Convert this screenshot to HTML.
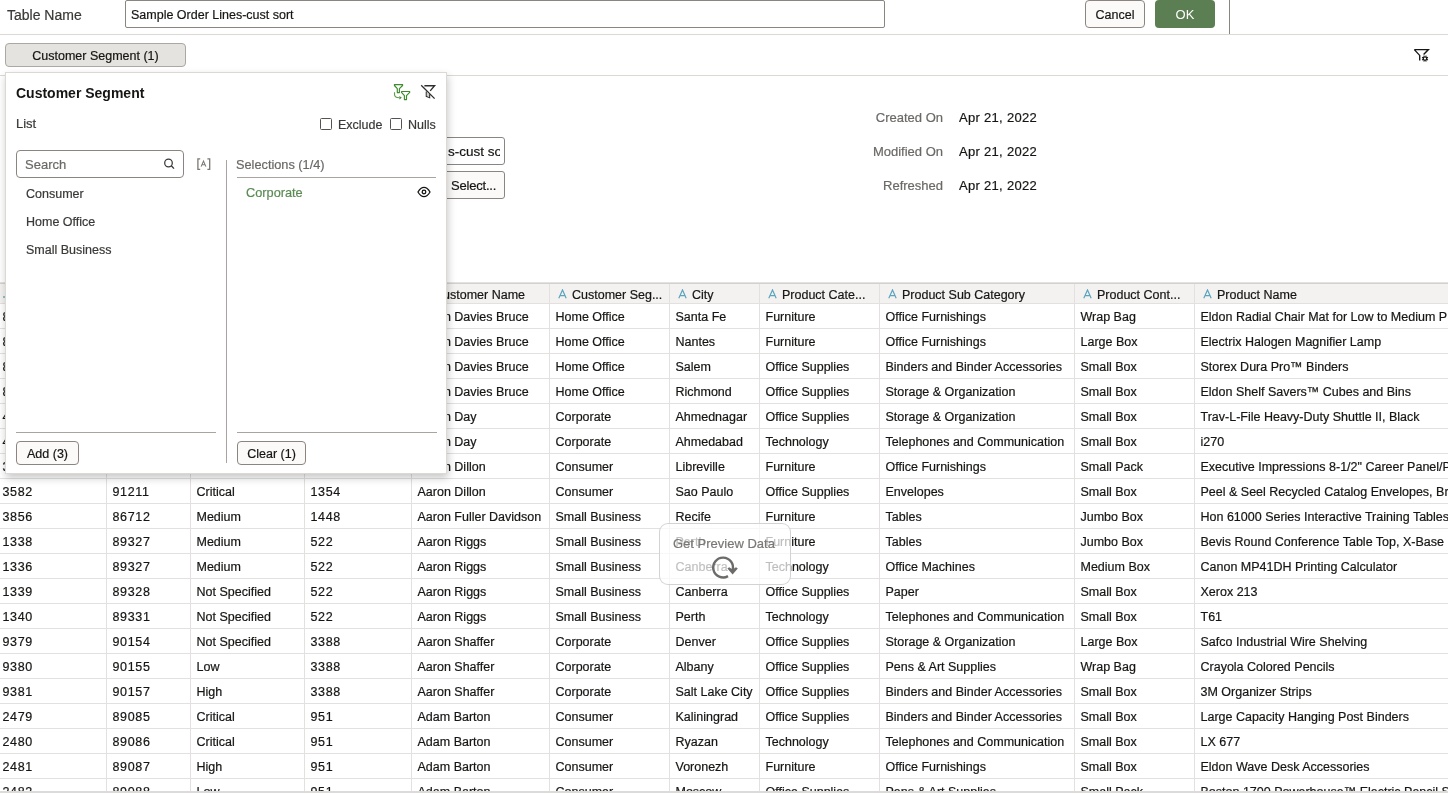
<!DOCTYPE html>
<html><head><meta charset="utf-8">
<style>
*{box-sizing:border-box;margin:0;padding:0}
html,body{width:1448px;height:795px;overflow:hidden;background:#fff}
body{position:relative;font-family:"Liberation Sans",sans-serif;color:#161513;font-size:13px;will-change:transform;-webkit-text-stroke-width:0.2px}
.a{position:absolute;white-space:nowrap}
.hl{position:absolute;height:1px}
.vl{position:absolute;width:1px}
/* top bar */
#tname{left:7px;top:5px;font-size:14px;color:#3a3937;line-height:20px}
#tinput{left:125px;top:0px;width:760px;height:28px;border:1px solid #8b8581;border-radius:2px;background:#fff}
#tinput span{position:absolute;left:5px;top:6px;line-height:16px;font-size:12.5px;color:#161513}
.btn{position:absolute;border:1px solid #8b8581;border-radius:4px;background:#fbfaf9;text-align:center;color:#161513}
#cancel{left:1085px;top:0px;width:60px;height:28px;line-height:28px;font-size:12.5px}
#ok{left:1155px;top:0px;width:60px;height:28px;line-height:30px;border:none;background:#5b7e52;color:#fff;font-size:13px;-webkit-text-stroke-width:0}
#chip{left:5px;top:43px;width:181px;height:24px;line-height:23px;padding-top:1px;background:#e4e3df;border:1px solid #aca7a2;border-radius:4px;font-size:12.5px}
/* meta */
.ml{position:absolute;right:505px;font-size:13px;color:#6b6966;line-height:16px;text-align:right}
.mv{position:absolute;left:959px;font-size:13px;color:#161513;line-height:16px;letter-spacing:0.3px}
/* table */
.hline{position:absolute;left:0;width:1448px;height:2px;background:#d2d1cf;border-top:1px solid #e3e2e0}
.hbg{position:absolute;left:0;width:1448px;height:19px;background:#f3f2f0}
.hc{position:absolute;height:19px;line-height:17px;white-space:nowrap;overflow:hidden;font-size:12.5px;color:#161513}
.ic{position:absolute;left:8px;top:4px}
.ht{position:absolute;left:22px;top:2px}
.rline{position:absolute;left:0;width:1448px;height:1px;background:#e2e1df}
.c{position:absolute;height:24px;line-height:24px;padding-left:5.5px;white-space:nowrap;overflow:hidden;font-size:12.5px;color:#161513}
.n{letter-spacing:0.65px}
.cline{position:absolute;top:284px;height:508px;width:1px;background:#e2e1df}
#tblbot{position:absolute;left:0;top:791px;width:1448px;height:2px;background:#dcdbd9}
#tblclip{position:absolute;left:0;top:0;width:1448px;height:791px;overflow:hidden}
/* panel */
#panel{position:absolute;left:5px;top:72px;width:442px;height:402px;background:#fff;border:1px solid #dcd8d4;box-shadow:1px 4px 8px rgba(0,0,0,0.22)}
#panel .a{position:absolute}
#ptitle{left:10px;top:11px;font-size:14px;font-weight:bold;-webkit-text-stroke-width:0;line-height:18px;color:#161513}
#plist{left:10px;top:43px;font-size:13px;line-height:16px;color:#3a3937}
.cb{position:absolute;width:12px;height:12px;border:1px solid #55524f;border-radius:1.5px;background:#fff}
#search{position:absolute;left:10px;top:77px;width:168px;height:28px;border:1px solid #8b8581;border-radius:4px}
#search span{position:absolute;left:8px;top:6px;line-height:16px;color:#6b6966;font-size:13px}
.li{position:absolute;left:20px;font-size:12.5px;color:#3a3937;line-height:16px}
#divider{position:absolute;left:220px;top:87px;width:1px;height:303px;background:#a9a49f}
#sel{left:230px;top:84px;color:#6b6966;font-size:12.75px;line-height:16px}
#selline{position:absolute;left:231px;top:104px;width:199px;height:1px;background:#a9a49f}
#corp{left:240px;top:112px;color:#5b8a55;font-size:12.75px;line-height:16px}
#lline{position:absolute;left:10px;top:359px;width:200px;height:1px;background:#a9a49f}
#rline{position:absolute;left:231px;top:359px;width:200px;height:1px;background:#a9a49f}
.pbtn{position:absolute;top:368px;height:24px;line-height:23px;padding-top:1px;border:1px solid #8b8581;border-radius:4px;background:#fbfaf9;text-align:center;font-size:12.5px;color:#161513}
/* overlay */
#ov{position:absolute;left:659px;top:523px;width:132px;height:62px;border:1px solid rgba(200,200,200,0.8);border-radius:9px;background:rgba(255,255,255,0.72)}
#ovt{position:absolute;left:13px;top:12px;font-size:13px;color:#7a7875;line-height:16px;white-space:nowrap}
</style></head>
<body>
<div id="tblclip">
<div class="hline" style="top:282px"></div>
<div class="hbg" style="top:284px"></div>
<div class="hc" style="left:-3px;width:109px;top:285px"><svg class="ic" width="9" height="10" viewBox="0 0 9 10"><path d="M0.8 9.2L4.5 0.9L8.2 9.2M2 6.6H7" fill="none" stroke="#5ba3bf" stroke-width="1.15"/></svg><span class="ht"></span></div>
<div class="hc" style="left:107px;width:83px;top:285px"><svg class="ic" width="9" height="10" viewBox="0 0 9 10"><path d="M0.8 9.2L4.5 0.9L8.2 9.2M2 6.6H7" fill="none" stroke="#5ba3bf" stroke-width="1.15"/></svg><span class="ht"></span></div>
<div class="hc" style="left:191px;width:113px;top:285px"><svg class="ic" width="9" height="10" viewBox="0 0 9 10"><path d="M0.8 9.2L4.5 0.9L8.2 9.2M2 6.6H7" fill="none" stroke="#5ba3bf" stroke-width="1.15"/></svg><span class="ht"></span></div>
<div class="hc" style="left:305px;width:106px;top:285px"><svg class="ic" width="9" height="10" viewBox="0 0 9 10"><path d="M0.8 9.2L4.5 0.9L8.2 9.2M2 6.6H7" fill="none" stroke="#5ba3bf" stroke-width="1.15"/></svg><span class="ht"></span></div>
<div class="hc" style="left:412px;width:137px;top:285px"><svg class="ic" width="9" height="10" viewBox="0 0 9 10"><path d="M0.8 9.2L4.5 0.9L8.2 9.2M2 6.6H7" fill="none" stroke="#5ba3bf" stroke-width="1.15"/></svg><span class="ht">Customer Name</span></div>
<div class="hc" style="left:550px;width:119px;top:285px"><svg class="ic" width="9" height="10" viewBox="0 0 9 10"><path d="M0.8 9.2L4.5 0.9L8.2 9.2M2 6.6H7" fill="none" stroke="#5ba3bf" stroke-width="1.15"/></svg><span class="ht">Customer Seg...</span></div>
<div class="hc" style="left:670px;width:89px;top:285px"><svg class="ic" width="9" height="10" viewBox="0 0 9 10"><path d="M0.8 9.2L4.5 0.9L8.2 9.2M2 6.6H7" fill="none" stroke="#5ba3bf" stroke-width="1.15"/></svg><span class="ht">City</span></div>
<div class="hc" style="left:760px;width:119px;top:285px"><svg class="ic" width="9" height="10" viewBox="0 0 9 10"><path d="M0.8 9.2L4.5 0.9L8.2 9.2M2 6.6H7" fill="none" stroke="#5ba3bf" stroke-width="1.15"/></svg><span class="ht">Product Cate...</span></div>
<div class="hc" style="left:880px;width:194px;top:285px"><svg class="ic" width="9" height="10" viewBox="0 0 9 10"><path d="M0.8 9.2L4.5 0.9L8.2 9.2M2 6.6H7" fill="none" stroke="#5ba3bf" stroke-width="1.15"/></svg><span class="ht">Product Sub Category</span></div>
<div class="hc" style="left:1075px;width:119px;top:285px"><svg class="ic" width="9" height="10" viewBox="0 0 9 10"><path d="M0.8 9.2L4.5 0.9L8.2 9.2M2 6.6H7" fill="none" stroke="#5ba3bf" stroke-width="1.15"/></svg><span class="ht">Product Cont...</span></div>
<div class="hc" style="left:1195px;width:405px;top:285px"><svg class="ic" width="9" height="10" viewBox="0 0 9 10"><path d="M0.8 9.2L4.5 0.9L8.2 9.2M2 6.6H7" fill="none" stroke="#5ba3bf" stroke-width="1.15"/></svg><span class="ht">Product Name</span></div>
<div class="rline" style="top:303px"></div>
<div class="c n" style="left:-3px;width:109px;top:305px">8001</div>
<div class="c n" style="left:107px;width:83px;top:305px">88520</div>
<div class="c" style="left:191px;width:113px;top:305px">High</div>
<div class="c n" style="left:305px;width:106px;top:305px">1500</div>
<div class="c" style="left:412px;width:137px;top:305px">Aaron Davies Bruce</div>
<div class="c" style="left:550px;width:119px;top:305px">Home Office</div>
<div class="c" style="left:670px;width:89px;top:305px">Santa Fe</div>
<div class="c" style="left:760px;width:119px;top:305px">Furniture</div>
<div class="c" style="left:880px;width:194px;top:305px">Office Furnishings</div>
<div class="c" style="left:1075px;width:119px;top:305px">Wrap Bag</div>
<div class="c" style="left:1195px;width:405px;top:305px">Eldon Radial Chair Mat for Low to Medium Pile Carpeting</div>
<div class="rline" style="top:328px"></div>
<div class="c n" style="left:-3px;width:109px;top:330px">8002</div>
<div class="c n" style="left:107px;width:83px;top:330px">88521</div>
<div class="c" style="left:191px;width:113px;top:330px">High</div>
<div class="c n" style="left:305px;width:106px;top:330px">1500</div>
<div class="c" style="left:412px;width:137px;top:330px">Aaron Davies Bruce</div>
<div class="c" style="left:550px;width:119px;top:330px">Home Office</div>
<div class="c" style="left:670px;width:89px;top:330px">Nantes</div>
<div class="c" style="left:760px;width:119px;top:330px">Furniture</div>
<div class="c" style="left:880px;width:194px;top:330px">Office Furnishings</div>
<div class="c" style="left:1075px;width:119px;top:330px">Large Box</div>
<div class="c" style="left:1195px;width:405px;top:330px">Electrix Halogen Magnifier Lamp</div>
<div class="rline" style="top:353px"></div>
<div class="c n" style="left:-3px;width:109px;top:355px">8003</div>
<div class="c n" style="left:107px;width:83px;top:355px">88522</div>
<div class="c" style="left:191px;width:113px;top:355px">High</div>
<div class="c n" style="left:305px;width:106px;top:355px">1500</div>
<div class="c" style="left:412px;width:137px;top:355px">Aaron Davies Bruce</div>
<div class="c" style="left:550px;width:119px;top:355px">Home Office</div>
<div class="c" style="left:670px;width:89px;top:355px">Salem</div>
<div class="c" style="left:760px;width:119px;top:355px">Office Supplies</div>
<div class="c" style="left:880px;width:194px;top:355px">Binders and Binder Accessories</div>
<div class="c" style="left:1075px;width:119px;top:355px">Small Box</div>
<div class="c" style="left:1195px;width:405px;top:355px">Storex Dura Pro™ Binders</div>
<div class="rline" style="top:378px"></div>
<div class="c n" style="left:-3px;width:109px;top:380px">8004</div>
<div class="c n" style="left:107px;width:83px;top:380px">88523</div>
<div class="c" style="left:191px;width:113px;top:380px">High</div>
<div class="c n" style="left:305px;width:106px;top:380px">1500</div>
<div class="c" style="left:412px;width:137px;top:380px">Aaron Davies Bruce</div>
<div class="c" style="left:550px;width:119px;top:380px">Home Office</div>
<div class="c" style="left:670px;width:89px;top:380px">Richmond</div>
<div class="c" style="left:760px;width:119px;top:380px">Office Supplies</div>
<div class="c" style="left:880px;width:194px;top:380px">Storage &amp; Organization</div>
<div class="c" style="left:1075px;width:119px;top:380px">Small Box</div>
<div class="c" style="left:1195px;width:405px;top:380px">Eldon Shelf Savers™ Cubes and Bins</div>
<div class="rline" style="top:403px"></div>
<div class="c n" style="left:-3px;width:109px;top:405px">4001</div>
<div class="c n" style="left:107px;width:83px;top:405px">88524</div>
<div class="c" style="left:191px;width:113px;top:405px">Low</div>
<div class="c n" style="left:305px;width:106px;top:405px">1500</div>
<div class="c" style="left:412px;width:137px;top:405px">Aaron Day</div>
<div class="c" style="left:550px;width:119px;top:405px">Corporate</div>
<div class="c" style="left:670px;width:89px;top:405px">Ahmednagar</div>
<div class="c" style="left:760px;width:119px;top:405px">Office Supplies</div>
<div class="c" style="left:880px;width:194px;top:405px">Storage &amp; Organization</div>
<div class="c" style="left:1075px;width:119px;top:405px">Small Box</div>
<div class="c" style="left:1195px;width:405px;top:405px">Trav-L-File Heavy-Duty Shuttle II, Black</div>
<div class="rline" style="top:428px"></div>
<div class="c n" style="left:-3px;width:109px;top:430px">4002</div>
<div class="c n" style="left:107px;width:83px;top:430px">88525</div>
<div class="c" style="left:191px;width:113px;top:430px">Low</div>
<div class="c n" style="left:305px;width:106px;top:430px">1500</div>
<div class="c" style="left:412px;width:137px;top:430px">Aaron Day</div>
<div class="c" style="left:550px;width:119px;top:430px">Corporate</div>
<div class="c" style="left:670px;width:89px;top:430px">Ahmedabad</div>
<div class="c" style="left:760px;width:119px;top:430px">Technology</div>
<div class="c" style="left:880px;width:194px;top:430px">Telephones and Communication</div>
<div class="c" style="left:1075px;width:119px;top:430px">Small Box</div>
<div class="c" style="left:1195px;width:405px;top:430px">i270</div>
<div class="rline" style="top:453px"></div>
<div class="c n" style="left:-3px;width:109px;top:455px">3001</div>
<div class="c n" style="left:107px;width:83px;top:455px">88526</div>
<div class="c" style="left:191px;width:113px;top:455px">Low</div>
<div class="c n" style="left:305px;width:106px;top:455px">1354</div>
<div class="c" style="left:412px;width:137px;top:455px">Aaron Dillon</div>
<div class="c" style="left:550px;width:119px;top:455px">Consumer</div>
<div class="c" style="left:670px;width:89px;top:455px">Libreville</div>
<div class="c" style="left:760px;width:119px;top:455px">Furniture</div>
<div class="c" style="left:880px;width:194px;top:455px">Office Furnishings</div>
<div class="c" style="left:1075px;width:119px;top:455px">Small Pack</div>
<div class="c" style="left:1195px;width:405px;top:455px">Executive Impressions 8-1/2&quot; Career Panel/Partition Cubicle Clock</div>
<div class="rline" style="top:478px"></div>
<div class="c n" style="left:-3px;width:109px;top:480px">3582</div>
<div class="c n" style="left:107px;width:83px;top:480px">91211</div>
<div class="c" style="left:191px;width:113px;top:480px">Critical</div>
<div class="c n" style="left:305px;width:106px;top:480px">1354</div>
<div class="c" style="left:412px;width:137px;top:480px">Aaron Dillon</div>
<div class="c" style="left:550px;width:119px;top:480px">Consumer</div>
<div class="c" style="left:670px;width:89px;top:480px">Sao Paulo</div>
<div class="c" style="left:760px;width:119px;top:480px">Office Supplies</div>
<div class="c" style="left:880px;width:194px;top:480px">Envelopes</div>
<div class="c" style="left:1075px;width:119px;top:480px">Small Box</div>
<div class="c" style="left:1195px;width:405px;top:480px">Peel &amp; Seel Recycled Catalog Envelopes, Brown</div>
<div class="rline" style="top:503px"></div>
<div class="c n" style="left:-3px;width:109px;top:505px">3856</div>
<div class="c n" style="left:107px;width:83px;top:505px">86712</div>
<div class="c" style="left:191px;width:113px;top:505px">Medium</div>
<div class="c n" style="left:305px;width:106px;top:505px">1448</div>
<div class="c" style="left:412px;width:137px;top:505px">Aaron Fuller Davidson</div>
<div class="c" style="left:550px;width:119px;top:505px">Small Business</div>
<div class="c" style="left:670px;width:89px;top:505px">Recife</div>
<div class="c" style="left:760px;width:119px;top:505px">Furniture</div>
<div class="c" style="left:880px;width:194px;top:505px">Tables</div>
<div class="c" style="left:1075px;width:119px;top:505px">Jumbo Box</div>
<div class="c" style="left:1195px;width:405px;top:505px">Hon 61000 Series Interactive Training Tables</div>
<div class="rline" style="top:528px"></div>
<div class="c n" style="left:-3px;width:109px;top:530px">1338</div>
<div class="c n" style="left:107px;width:83px;top:530px">89327</div>
<div class="c" style="left:191px;width:113px;top:530px">Medium</div>
<div class="c n" style="left:305px;width:106px;top:530px">522</div>
<div class="c" style="left:412px;width:137px;top:530px">Aaron Riggs</div>
<div class="c" style="left:550px;width:119px;top:530px">Small Business</div>
<div class="c" style="left:670px;width:89px;top:530px">Perth</div>
<div class="c" style="left:760px;width:119px;top:530px">Furniture</div>
<div class="c" style="left:880px;width:194px;top:530px">Tables</div>
<div class="c" style="left:1075px;width:119px;top:530px">Jumbo Box</div>
<div class="c" style="left:1195px;width:405px;top:530px">Bevis Round Conference Table Top, X-Base</div>
<div class="rline" style="top:553px"></div>
<div class="c n" style="left:-3px;width:109px;top:555px">1336</div>
<div class="c n" style="left:107px;width:83px;top:555px">89327</div>
<div class="c" style="left:191px;width:113px;top:555px">Medium</div>
<div class="c n" style="left:305px;width:106px;top:555px">522</div>
<div class="c" style="left:412px;width:137px;top:555px">Aaron Riggs</div>
<div class="c" style="left:550px;width:119px;top:555px">Small Business</div>
<div class="c" style="left:670px;width:89px;top:555px">Canberra</div>
<div class="c" style="left:760px;width:119px;top:555px">Technology</div>
<div class="c" style="left:880px;width:194px;top:555px">Office Machines</div>
<div class="c" style="left:1075px;width:119px;top:555px">Medium Box</div>
<div class="c" style="left:1195px;width:405px;top:555px">Canon MP41DH Printing Calculator</div>
<div class="rline" style="top:578px"></div>
<div class="c n" style="left:-3px;width:109px;top:580px">1339</div>
<div class="c n" style="left:107px;width:83px;top:580px">89328</div>
<div class="c" style="left:191px;width:113px;top:580px">Not Specified</div>
<div class="c n" style="left:305px;width:106px;top:580px">522</div>
<div class="c" style="left:412px;width:137px;top:580px">Aaron Riggs</div>
<div class="c" style="left:550px;width:119px;top:580px">Small Business</div>
<div class="c" style="left:670px;width:89px;top:580px">Canberra</div>
<div class="c" style="left:760px;width:119px;top:580px">Office Supplies</div>
<div class="c" style="left:880px;width:194px;top:580px">Paper</div>
<div class="c" style="left:1075px;width:119px;top:580px">Small Box</div>
<div class="c" style="left:1195px;width:405px;top:580px">Xerox 213</div>
<div class="rline" style="top:603px"></div>
<div class="c n" style="left:-3px;width:109px;top:605px">1340</div>
<div class="c n" style="left:107px;width:83px;top:605px">89331</div>
<div class="c" style="left:191px;width:113px;top:605px">Not Specified</div>
<div class="c n" style="left:305px;width:106px;top:605px">522</div>
<div class="c" style="left:412px;width:137px;top:605px">Aaron Riggs</div>
<div class="c" style="left:550px;width:119px;top:605px">Small Business</div>
<div class="c" style="left:670px;width:89px;top:605px">Perth</div>
<div class="c" style="left:760px;width:119px;top:605px">Technology</div>
<div class="c" style="left:880px;width:194px;top:605px">Telephones and Communication</div>
<div class="c" style="left:1075px;width:119px;top:605px">Small Box</div>
<div class="c" style="left:1195px;width:405px;top:605px">T61</div>
<div class="rline" style="top:628px"></div>
<div class="c n" style="left:-3px;width:109px;top:630px">9379</div>
<div class="c n" style="left:107px;width:83px;top:630px">90154</div>
<div class="c" style="left:191px;width:113px;top:630px">Not Specified</div>
<div class="c n" style="left:305px;width:106px;top:630px">3388</div>
<div class="c" style="left:412px;width:137px;top:630px">Aaron Shaffer</div>
<div class="c" style="left:550px;width:119px;top:630px">Corporate</div>
<div class="c" style="left:670px;width:89px;top:630px">Denver</div>
<div class="c" style="left:760px;width:119px;top:630px">Office Supplies</div>
<div class="c" style="left:880px;width:194px;top:630px">Storage &amp; Organization</div>
<div class="c" style="left:1075px;width:119px;top:630px">Large Box</div>
<div class="c" style="left:1195px;width:405px;top:630px">Safco Industrial Wire Shelving</div>
<div class="rline" style="top:653px"></div>
<div class="c n" style="left:-3px;width:109px;top:655px">9380</div>
<div class="c n" style="left:107px;width:83px;top:655px">90155</div>
<div class="c" style="left:191px;width:113px;top:655px">Low</div>
<div class="c n" style="left:305px;width:106px;top:655px">3388</div>
<div class="c" style="left:412px;width:137px;top:655px">Aaron Shaffer</div>
<div class="c" style="left:550px;width:119px;top:655px">Corporate</div>
<div class="c" style="left:670px;width:89px;top:655px">Albany</div>
<div class="c" style="left:760px;width:119px;top:655px">Office Supplies</div>
<div class="c" style="left:880px;width:194px;top:655px">Pens &amp; Art Supplies</div>
<div class="c" style="left:1075px;width:119px;top:655px">Wrap Bag</div>
<div class="c" style="left:1195px;width:405px;top:655px">Crayola Colored Pencils</div>
<div class="rline" style="top:678px"></div>
<div class="c n" style="left:-3px;width:109px;top:680px">9381</div>
<div class="c n" style="left:107px;width:83px;top:680px">90157</div>
<div class="c" style="left:191px;width:113px;top:680px">High</div>
<div class="c n" style="left:305px;width:106px;top:680px">3388</div>
<div class="c" style="left:412px;width:137px;top:680px">Aaron Shaffer</div>
<div class="c" style="left:550px;width:119px;top:680px">Corporate</div>
<div class="c" style="left:670px;width:89px;top:680px">Salt Lake City</div>
<div class="c" style="left:760px;width:119px;top:680px">Office Supplies</div>
<div class="c" style="left:880px;width:194px;top:680px">Binders and Binder Accessories</div>
<div class="c" style="left:1075px;width:119px;top:680px">Small Box</div>
<div class="c" style="left:1195px;width:405px;top:680px">3M Organizer Strips</div>
<div class="rline" style="top:703px"></div>
<div class="c n" style="left:-3px;width:109px;top:705px">2479</div>
<div class="c n" style="left:107px;width:83px;top:705px">89085</div>
<div class="c" style="left:191px;width:113px;top:705px">Critical</div>
<div class="c n" style="left:305px;width:106px;top:705px">951</div>
<div class="c" style="left:412px;width:137px;top:705px">Adam Barton</div>
<div class="c" style="left:550px;width:119px;top:705px">Consumer</div>
<div class="c" style="left:670px;width:89px;top:705px">Kaliningrad</div>
<div class="c" style="left:760px;width:119px;top:705px">Office Supplies</div>
<div class="c" style="left:880px;width:194px;top:705px">Binders and Binder Accessories</div>
<div class="c" style="left:1075px;width:119px;top:705px">Small Box</div>
<div class="c" style="left:1195px;width:405px;top:705px">Large Capacity Hanging Post Binders</div>
<div class="rline" style="top:728px"></div>
<div class="c n" style="left:-3px;width:109px;top:730px">2480</div>
<div class="c n" style="left:107px;width:83px;top:730px">89086</div>
<div class="c" style="left:191px;width:113px;top:730px">Critical</div>
<div class="c n" style="left:305px;width:106px;top:730px">951</div>
<div class="c" style="left:412px;width:137px;top:730px">Adam Barton</div>
<div class="c" style="left:550px;width:119px;top:730px">Consumer</div>
<div class="c" style="left:670px;width:89px;top:730px">Ryazan</div>
<div class="c" style="left:760px;width:119px;top:730px">Technology</div>
<div class="c" style="left:880px;width:194px;top:730px">Telephones and Communication</div>
<div class="c" style="left:1075px;width:119px;top:730px">Small Box</div>
<div class="c" style="left:1195px;width:405px;top:730px">LX 677</div>
<div class="rline" style="top:753px"></div>
<div class="c n" style="left:-3px;width:109px;top:755px">2481</div>
<div class="c n" style="left:107px;width:83px;top:755px">89087</div>
<div class="c" style="left:191px;width:113px;top:755px">High</div>
<div class="c n" style="left:305px;width:106px;top:755px">951</div>
<div class="c" style="left:412px;width:137px;top:755px">Adam Barton</div>
<div class="c" style="left:550px;width:119px;top:755px">Consumer</div>
<div class="c" style="left:670px;width:89px;top:755px">Voronezh</div>
<div class="c" style="left:760px;width:119px;top:755px">Furniture</div>
<div class="c" style="left:880px;width:194px;top:755px">Office Furnishings</div>
<div class="c" style="left:1075px;width:119px;top:755px">Small Box</div>
<div class="c" style="left:1195px;width:405px;top:755px">Eldon Wave Desk Accessories</div>
<div class="rline" style="top:778px"></div>
<div class="c n" style="left:-3px;width:109px;top:780px">2482</div>
<div class="c n" style="left:107px;width:83px;top:780px">89088</div>
<div class="c" style="left:191px;width:113px;top:780px">Low</div>
<div class="c n" style="left:305px;width:106px;top:780px">951</div>
<div class="c" style="left:412px;width:137px;top:780px">Adam Barton</div>
<div class="c" style="left:550px;width:119px;top:780px">Consumer</div>
<div class="c" style="left:670px;width:89px;top:780px">Moscow</div>
<div class="c" style="left:760px;width:119px;top:780px">Office Supplies</div>
<div class="c" style="left:880px;width:194px;top:780px">Pens &amp; Art Supplies</div>
<div class="c" style="left:1075px;width:119px;top:780px">Small Pack</div>
<div class="c" style="left:1195px;width:405px;top:780px">Boston 1700 Powerhouse™ Electric Pencil Sharpener</div>
<div class="rline" style="top:803px"></div>
<div class="cline" style="left:106px"></div>
<div class="cline" style="left:190px"></div>
<div class="cline" style="left:304px"></div>
<div class="cline" style="left:411px"></div>
<div class="cline" style="left:549px"></div>
<div class="cline" style="left:669px"></div>
<div class="cline" style="left:759px"></div>
<div class="cline" style="left:879px"></div>
<div class="cline" style="left:1074px"></div>
<div class="cline" style="left:1194px"></div>
</div>
<div id="tblbot"></div>
<div style="position:absolute;left:3px;top:296px;width:2px;height:2px;background:#8fc0d3"></div>

<div class="a" id="tname">Table Name</div>
<div class="a" id="tinput"><span>Sample Order Lines-cust sort</span></div>
<div class="btn" id="cancel">Cancel</div>
<div class="btn" id="ok">OK</div>
<div class="vl" style="left:1229px;top:0;height:34px;background:#8b8581"></div>
<div class="hl" style="left:0;top:34px;width:1448px;background:#dcd8d4"></div>
<div class="hl" style="left:0;top:75px;width:1448px;background:#dcd8d4"></div>
<div class="a btn" id="chip">Customer Segment (1)</div>
<svg class="a" style="left:1412px;top:47px" width="18" height="16" viewBox="0 0 18 16">
 <path d="M2.3 2.6H16.4L11.6 7.4M2.3 2.6L7.7 8.4V13.6" fill="none" stroke="#161513" stroke-width="1.35" stroke-linejoin="miter"/>
 <circle cx="13" cy="11.6" r="1.75" fill="none" stroke="#161513" stroke-width="1.3"/>
 <path d="M15.03 12.44L15.96 12.82M13.84 13.63L14.22 14.56M12.16 13.63L11.78 14.56M10.97 12.44L10.04 12.82M10.97 10.76L10.04 10.38M12.16 9.57L11.78 8.64M13.84 9.57L14.22 8.64M15.03 10.76L15.96 10.38" stroke="#161513" stroke-width="1.2"/>
</svg>

<!-- background form under panel -->
<div style="position:absolute;left:300px;top:137px;width:205px;height:28px;border:1px solid #8b8581;border-radius:3px;background:#fff;overflow:hidden"><span style="position:absolute;left:147px;top:6px;width:52px;overflow:hidden;line-height:16px;white-space:nowrap;font-size:13.5px">s-cust sort</span></div>
<div style="position:absolute;left:300px;top:171px;width:205px;height:28px;border:1px solid #8b8581;border-radius:3px;background:#fbfaf9;overflow:hidden"><span style="position:absolute;left:150px;top:6px;line-height:16px;white-space:nowrap;letter-spacing:-0.2px">Select...</span></div>

<div class="ml" style="top:110px">Created On</div>
<div class="mv" style="top:110px">Apr 21, 2022</div>
<div class="ml" style="top:144px">Modified On</div>
<div class="mv" style="top:144px">Apr 21, 2022</div>
<div class="ml" style="top:178px">Refreshed</div>
<div class="mv" style="top:178px">Apr 21, 2022</div>

<div id="panel">
 <div class="a" id="ptitle">Customer Segment</div>
 <div class="a" id="plist">List</div>
 <div class="cb" style="left:314px;top:45px"></div>
 <div class="a" style="left:332px;top:44px;line-height:16px;color:#3a3937;font-size:12.5px">Exclude</div>
 <div class="cb" style="left:384px;top:45px"></div>
 <div class="a" style="left:402px;top:44px;line-height:16px;color:#3a3937;font-size:12.5px">Nulls</div>
 <div id="search"><span>Search</span>

 </div>

 <div class="li" style="top:113px">Consumer</div>
 <div class="li" style="top:141px">Home Office</div>
 <div class="li" style="top:169px">Small Business</div>
 <div id="divider"></div>
 <div class="a" id="sel">Selections (1/4)</div>
 <div id="selline"></div>
 <div class="a" id="corp">Corporate</div>
 <svg class="a" style="left:411px;top:113px" width="14" height="12" viewBox="0 0 14 12">
  <path d="M1 6C2.8 2.8 4.8 1.3 7 1.3S11.2 2.8 13 6C11.2 9.2 9.2 10.7 7 10.7S2.8 9.2 1 6Z" fill="none" stroke="#161513" stroke-width="1.3"/>
  <circle cx="7" cy="6" r="1.8" fill="none" stroke="#161513" stroke-width="1.3"/>
 </svg>
 <div id="lline"></div>
 <div id="rline"></div>
 <div class="pbtn" style="left:10px;width:63px">Add (3)</div>
 <div class="pbtn" style="left:231px;width:69px">Clear (1)</div>
</div>


<svg class="a" style="left:388px;top:80px" width="52" height="24" viewBox="0 0 52 24">
 <g fill="none" stroke="#3d8b2c" stroke-width="1.15" stroke-linejoin="round">
  <path d="M6.4 4.6H14.6V5.5L11.4 8.7V12.6H9.3V8.7L6.4 5.5Z"/>
  <path d="M13.5 11.5H21.7V12.4L18.5 15.6V19.6H16.4V15.6L13.5 12.4Z"/>
  <path d="M6.5 12.2V14.3C6.5 16.6 8.2 17.8 11.2 17.8" stroke-width="1.1" opacity="0.85"/>
 </g>
 <path d="M11.4 16.1L13.8 17.8L11.4 19.5Z" fill="#3d8b2c"/>
 <g fill="none" stroke="#2f2e2c" stroke-width="1.3">
  <path d="M33.2 5.2L46.6 18.6"/>
  <path d="M36.4 5.7H46.6L42.2 10.9" stroke-width="1.35"/>
  <path d="M38.3 11.6V16.4L41.6 17.6V14.3" stroke-width="1.2"/>
 </g>
 <path d="M38.8 12.2V16L41.1 16.9V14.2Z" fill="#cfcfcf"/>
</svg>


<svg class="a" style="left:155px;top:150px" width="60" height="30" viewBox="155 150 60 30">
 <circle cx="168.5" cy="163" r="3.8" fill="none" stroke="#3a3937" stroke-width="1.25"/>
 <path d="M171.3 165.8L174 168.6" stroke="#3a3937" stroke-width="1.35"/>
 <path d="M200.2 158.8H197.9V169.3H200.2M207.4 158.8H209.7V169.3H207.4" fill="none" stroke="#7d7772" stroke-width="1.3"/>
 <path d="M201.1 166.6L203.5 161.1L205.9 166.6M202.2 164.8H204.8" fill="none" stroke="#7d7772" stroke-width="1.05"/>
</svg>
<div id="ov">
 <div id="ovt">Get Preview Data</div>
</div>
<svg class="a" style="left:700px;top:545px" width="45" height="40" viewBox="700 545 45 40">
 <path d="M728 576.1A9.9 9.9 0 1 1 732.6 570.2" fill="none" stroke="#6c6b69" stroke-width="2.4"/>
 <path d="M727.4 568.4L729.2 567.3L732.6 569.6L736 567.3L737.8 568.4L732.6 574.5Z" fill="#6c6b69"/>
</svg>
</body></html>
